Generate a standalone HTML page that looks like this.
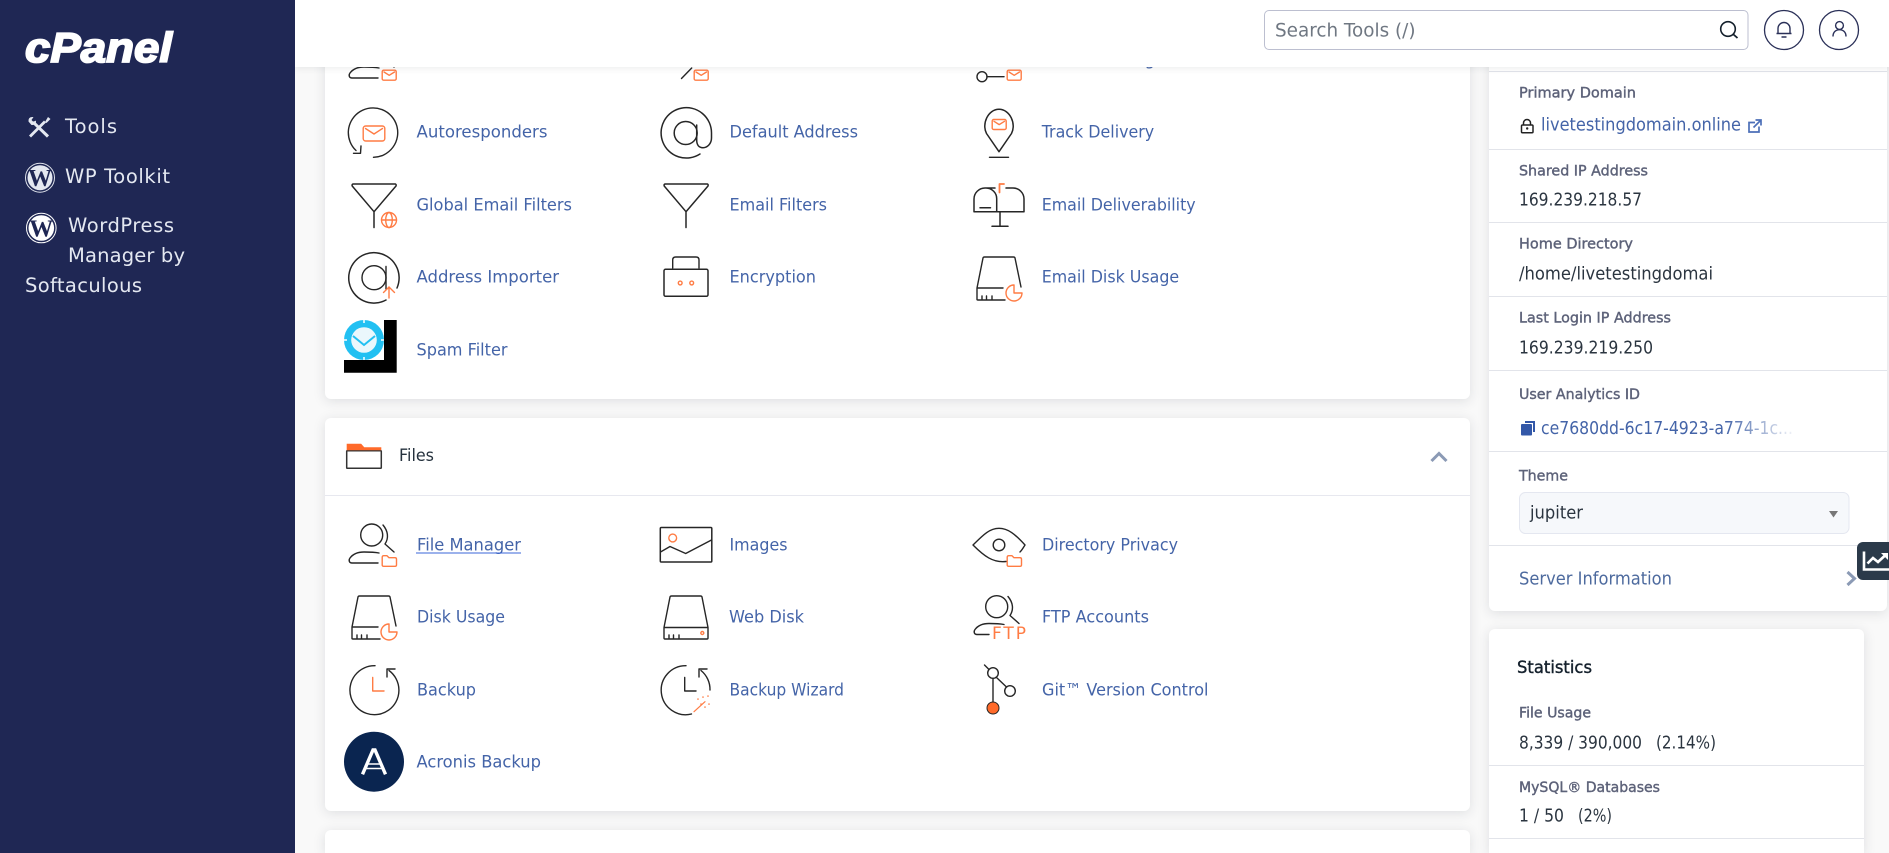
<!DOCTYPE html>
<html><head><meta charset="utf-8"><title>cPanel</title>
<style>
html,body{margin:0;padding:0;width:1889px;height:853px;overflow:hidden;background:#f9f9f9}
#w{position:absolute;left:0;top:0;width:1889px;height:853px;overflow:hidden;background:#f9f9f9}
.a{position:absolute}
.p{background:#fff;border-radius:6px;box-shadow:0 2px 12px rgba(40,50,60,.13)}
svg{position:absolute;left:0;top:0;display:block}
text{font-family:"DejaVu Sans","Liberation Sans",sans-serif}
.l{font-size:17px;fill:#4464a8;transform:translateY(-.7px)}
.v{font-size:17px;fill:#2b3540;transform:translateY(-.5px)}
.b{font-size:14.5px;fill:#5d6279;stroke:#5d6279;stroke-width:.4;transform:translateY(-.5px)}
.s{font-size:19.5px;fill:#e4e8f1}
.k{fill:none;stroke:#262626;stroke-width:1.4;stroke-linecap:round;stroke-linejoin:round}
.o{fill:none;stroke:#ff7c44;stroke-width:1.4;stroke-linecap:round;stroke-linejoin:round}
</style></head><body><div id="w">
<div class="a p" style="left:325px;top:0;width:1145px;height:399px;border-radius:0 0 6px 6px"></div>
<div class="a p" style="left:325px;top:418px;width:1145px;height:393px"></div>
<div class="a p" style="left:325px;top:830px;width:1145px;height:23px;border-radius:6px 6px 0 0"></div>
<div class="a p" style="left:1489px;top:0;width:398px;height:611px;border-radius:0 0 6px 6px"></div>
<div class="a p" style="left:1489px;top:629px;width:375px;height:224px;border-radius:6px 6px 0 0"></div>

<svg width="1889" height="853" viewBox="0 0 1889 853">
<defs>
<linearGradient id="fade" gradientUnits="userSpaceOnUse" x1="1725" y1="0" x2="1793" y2="0"><stop offset="0" stop-color="#4464a8"/><stop offset="1" stop-color="#4464a8" stop-opacity=".08"/></linearGradient>
<g id="person"><circle class="k" cx="371.7" cy="535" r="11"/><path class="k" d="M383 525c5 6 6 13 2 19l9 8"/><path class="k" d="M378 563H352c-3 0-3.500-3-2-5 3-4 8-6 14-6 6 0 10 0 15 1"/></g>
<g id="env"><rect class="o" x=".7" y=".7" width="14" height="10" rx="1.500"/><path class="o" d="M2.500 2.500 7.700 5.800 13 2.500"/></g>
<g id="folder"><path class="o" d="M.7 2.200Q.7 .7 2.200 .7H5.500L7.500 2.700H13.500Q15 2.700 15 4.200V10Q15 11.300 13.500 11.300H2.200Q.7 11.300 .7 10Z"/></g>
<g id="disk"><path class="k" d="M1003 288H977L983 258Q983.300 257 984.500 257H1013.500Q1014.700 257 1015 258L1021 287M977 288V299.500Q977 300 978 300H1005M982 296V300M986.500 296V300M992 296V300"/></g>
<g id="pie"><path class="o" d="M1014 285A8 8 0 1 0 1022 293H1014Z"/></g>
<g id="funnel"><path class="k" d="M353 184H395.500Q396.500 184.500 396 186L374 211.700 352.200 186Q351.700 184.500 353 184ZM374 212V227.500" style="stroke-width:1.500"/></g>
<g id="clockarc"><path class="k" d="M375 665.700A24.500 24.500 0 1 0 389 670.500"/><path class="k" d="M395 669H387V677"/></g>
</defs>

<use href="#person" transform="translate(0,-485)"/>
<use href="#env" transform="translate(381.500,69.500)"/>
<path class="k" d="M681.500 78.500 691.700 68"/>
<use href="#env" transform="translate(693.500,69.500)"/>
<circle class="k" cx="982" cy="76.700" r="5"/><path class="k" d="M987 76.700H1004"/>
<use href="#env" transform="translate(1006.500,69.500)"/>
<text class="l" x="1042" y="65.500" textLength="113" lengthAdjust="spacingAndGlyphs">Email Routing</text>

<path class="k" d="M373.500 157.300A24.700 24.700 0 1 0 356 150.500"/><path class="k" d="M353.500 153.300H360.500L361 146"/>
<rect class="o" x="363.200" y="126" width="21.600" height="15" rx="2.500"/><path class="o" d="M365.500 128.500 374 134 382.500 128.500"/>
<text class="l" x="416.500" y="138" textLength="131" lengthAdjust="spacingAndGlyphs">Autoresponders</text>

<path class="k" d="M700 154A25.200 25.200 0 1 1 711.500 133V138C711.500 144 707 147.700 703 147.700 699 147.700 696.700 145 696.700 140V125" style="stroke-width:1.500"/>
<circle class="k" cx="685.700" cy="133" r="11.500" style="stroke-width:1.500"/>
<text class="l" x="729.500" y="138" textLength="128.500" lengthAdjust="spacingAndGlyphs">Default Address</text>

<path class="k" d="M999 151.700 986.500 133.500C981.500 124 988 109.300 999 109.300 1010 109.300 1016.500 124 1011.500 133.500Z" style="stroke-width:1.500"/>
<path class="k" d="M989.500 157.300H1008.500"/>
<use href="#env" transform="translate(991.500,118.800)"/>
<text class="l" x="1041.700" y="138" textLength="112.500" lengthAdjust="spacingAndGlyphs">Track Delivery</text>

<use href="#funnel"/>
<circle class="o" cx="389" cy="220" r="7.500"/><ellipse class="o" cx="389" cy="220" rx="3.300" ry="7.500"/><path class="o" d="M381.500 220H396.500"/>
<text class="l" x="416.500" y="211" textLength="155.500" lengthAdjust="spacingAndGlyphs">Global Email Filters</text>

<use href="#funnel" transform="translate(312,0)"/>
<text class="l" x="729.500" y="211" textLength="97.500" lengthAdjust="spacingAndGlyphs">Email Filters</text>

<path class="k" d="M974 211.700V199A11 11 0 0 1 985 188H986A10.700 10.700 0 0 1 996.700 199V211.700ZM986 188H995M1006 188H1013A11 11 0 0 1 1024 199V211.700H996.700M1000 212V226M992 226.300H1008M980 207.700H990.500" style="stroke-width:1.500"/>
<path class="o" d="M999.500 192.500V184H1004" style="stroke-width:1.800"/>
<text class="l" x="1041.700" y="211" textLength="154" lengthAdjust="spacingAndGlyphs">Email Deliverability</text>

<path class="k" d="M397 288A25.200 25.200 0 1 0 386 300" style="stroke-width:1.500"/>
<circle class="k" cx="374" cy="277.700" r="12"/><path class="k" d="M386 266.500V289"/>
<path class="o" d="M389 298V287M383.500 292.500 389 287 394.500 292.500"/>
<text class="l" x="416.500" y="283" textLength="142.500" lengthAdjust="spacingAndGlyphs">Address Importer</text>

<path class="k" d="M672.700 268V260Q672.700 257 675.700 257H696Q699 257 699 260V268"/>
<rect class="k" x="664" y="269.300" width="44" height="27" rx="1.500" style="stroke-width:1.500"/>
<circle class="o" cx="680.200" cy="283" r="1.900"/><circle class="o" cx="691.700" cy="283" r="1.900"/>
<text class="l" x="729.500" y="283" textLength="86.500" lengthAdjust="spacingAndGlyphs">Encryption</text>

<use href="#disk"/><use href="#pie"/>
<text class="l" x="1041.700" y="283" textLength="137.500" lengthAdjust="spacingAndGlyphs">Email Disk Usage</text>

<path d="M384 320H396.700V372.700H344V360H384Z" fill="#000"/>
<circle cx="364" cy="340" r="20" fill="#22c0f2"/>
<circle cx="364" cy="340" r="12.800" fill="#eaf7fc"/>
<path d="M353 336 364 345 375 336" fill="none" stroke="#22c0f2" stroke-width="2"/>
<g stroke="#fff" stroke-width="1.500"><path d="M364 320V323M364 357V360M344 340H347M381 340H384"/></g>
<text class="l" x="416.500" y="356" textLength="91" lengthAdjust="spacingAndGlyphs">Spam Filter</text>

<rect x="346.700" y="450.700" width="34.600" height="17.500" fill="#fff" stroke="#333" stroke-width="1.500" rx=".5"/>
<path d="M347 450V444H361L364 447.500H381V450Z" fill="#ff6a2a" stroke="#ff6a2a" stroke-width=".6"/>
<text x="399" y="461" font-size="17" fill="#26323e" textLength="35" lengthAdjust="spacingAndGlyphs">Files</text>
<path d="M1431.500 461 1439 453.500 1446.500 461" fill="none" stroke="#8b9ab5" stroke-width="3"/>
<rect x="325" y="495" width="1145" height="1" fill="#e7e8ef"/>

<use href="#person"/><use href="#folder" transform="translate(381.500,555)"/>
<text class="l" x="417" y="551" textLength="104" lengthAdjust="spacingAndGlyphs">File Manager</text>
<rect x="416" y="552.500" width="105" height="1" fill="#3a66d8"/>

<rect class="k" x="660.300" y="527.500" width="51.500" height="34.500" rx="1" style="stroke-width:1.500"/>
<circle class="o" cx="672.700" cy="538" r="3.900"/>
<path class="k" d="M660.500 552 670 546.500 685.700 553.500 711.500 540"/>
<text class="l" x="729.500" y="551" textLength="58" lengthAdjust="spacingAndGlyphs">Images</text>

<path class="k" d="M1006 561.500C993 563 984 556 973 545 984 534 990 528.300 999 528.300 1008 528.300 1015 534 1025 545 1023 548 1022 550 1020 552" style="stroke-width:1.400"/>
<circle class="k" cx="999" cy="545" r="5.800"/>
<use href="#folder" transform="translate(1006.500,555)"/>
<text class="l" x="1042" y="551" textLength="136" lengthAdjust="spacingAndGlyphs">Directory Privacy</text>

<use href="#disk" transform="translate(-625,339)"/><use href="#pie" transform="translate(-625,339)"/>
<text class="l" x="417" y="623" textLength="88" lengthAdjust="spacingAndGlyphs">Disk Usage</text>

<path class="k" d="M664 627.500 670 597Q670.300 596 671.500 596H700.500Q701.700 596 702 597L708 627.500V638Q708 639 707 639H665Q664 639 664 638ZM664 627.500H708M669 635V639M673.500 635V639M679 635V639"/>
<circle class="o" cx="702.300" cy="633" r="1.500"/>
<text class="l" x="729" y="623" textLength="75" lengthAdjust="spacingAndGlyphs">Web Disk</text>

<circle class="k" cx="996.700" cy="606.700" r="11"/>
<path class="k" d="M1008 596.500c5 6 6 13 2 19l9 8"/>
<path class="k" d="M989 634.500H977c-3 0-3.500-3-2-5 3-4 8-6 14-6 6 0 10 0 15 1"/>
<text x="992" y="639" font-size="17" fill="#ff7c44" textLength="34" lengthAdjust="spacing">FTP</text>
<text class="l" x="1042" y="623" textLength="107" lengthAdjust="spacingAndGlyphs">FTP Accounts</text>

<use href="#clockarc"/>
<path class="o" d="M372.700 677.500V691H384"/>
<text class="l" x="417" y="696" textLength="59" lengthAdjust="spacingAndGlyphs">Backup</text>

<path class="k" d="M686 665.700A24.500 24.500 0 1 0 691.500 714M710 690A24.500 24.500 0 0 0 701 670.500"/>
<path class="k" d="M707 669H699V677"/>
<path class="k" d="M684.700 677.500V691H696"/>
<path class="o" d="M694 711.700 705 701.700" style="stroke-width:1.200"/>
<path class="o" d="M698 699V699.100M703 697V697.100M708 696V696.100M709 704V704.100M701 704V704.100M705 707V707.100" style="stroke-width:1.600"/>
<text class="l" x="729.500" y="696" textLength="114.500" lengthAdjust="spacingAndGlyphs">Backup Wizard</text>

<path class="k" d="M984.500 665 989 669.500"/>
<circle class="k" cx="993" cy="673" r="5.300"/>
<path class="k" d="M993 678.500V702.500M996.500 677.500 1006.500 687"/>
<circle class="k" cx="1010" cy="691" r="5.300"/>
<circle cx="993" cy="708" r="6" fill="#ff6a2a" stroke="#262626" stroke-width="1"/>
<text class="l" x="1042" y="696" textLength="166.500" lengthAdjust="spacingAndGlyphs">Git™ Version Control</text>

<circle cx="374" cy="761.700" r="30" fill="#0a2550"/>
<path d="M362.500 774.300 373 750H375L385.500 774.300" fill="none" stroke="#fff" stroke-width="3.400"/>
<path d="M367 764H381M365 768.500H383" stroke="#fff" stroke-width="1.600"/>
<text class="l" x="416.500" y="768" textLength="124.500" lengthAdjust="spacingAndGlyphs">Acronis Backup</text>

<g fill="#e2e4ea">
<rect x="1489" y="71" width="398" height="1"/>
<rect x="1489" y="149" width="398" height="1"/>
<rect x="1489" y="222" width="398" height="1"/>
<rect x="1489" y="296" width="398" height="1"/>
<rect x="1489" y="370" width="398" height="1"/>
<rect x="1489" y="451" width="398" height="1"/>
<rect x="1489" y="545" width="398" height="1"/>
<rect x="1489" y="765" width="375" height="1"/>
<rect x="1489" y="838" width="375" height="1"/>
</g>

<text class="b" x="1519" y="98" textLength="117" lengthAdjust="spacingAndGlyphs">Primary Domain</text>
<path d="M1523.500 125V123A3.500 3.500 0 0 1 1530.500 123V125" fill="none" stroke="#222" stroke-width="1.500"/>
<rect x="1521.500" y="125" width="11.500" height="7.700" rx="1" fill="none" stroke="#222" stroke-width="1.500"/>
<circle cx="1527.200" cy="128.500" r="1.200" fill="#222"/>
<text class="l" x="1541" y="131" textLength="200" lengthAdjust="spacingAndGlyphs" style="font-size:18px">livetestingdomain.online</text>
<path d="M1755 122.500H1749V132H1759V126.500M1753.500 127.500 1760.500 120.500M1755.500 120H1761V125.500" fill="none" stroke="#4c6fb8" stroke-width="1.700"/>

<text class="b" x="1519" y="176" textLength="129" lengthAdjust="spacingAndGlyphs">Shared IP Address</text>
<text class="v" x="1519" y="206" textLength="123" lengthAdjust="spacingAndGlyphs" style="font-size:18px">169.239.218.57</text>
<text class="b" x="1519" y="249" textLength="114" lengthAdjust="spacingAndGlyphs">Home Directory</text>
<text class="v" x="1519" y="280" textLength="194" lengthAdjust="spacingAndGlyphs" style="font-size:18px">/home/livetestingdomai</text>
<text class="b" x="1519" y="323" textLength="152" lengthAdjust="spacingAndGlyphs">Last Login IP Address</text>
<text class="v" x="1519" y="354" textLength="134" lengthAdjust="spacingAndGlyphs" style="font-size:18px">169.239.219.250</text>
<text class="b" x="1519" y="399.500" textLength="121" lengthAdjust="spacingAndGlyphs">User Analytics ID</text>
<path d="M1525 421H1535V432H1533V423H1525Z" fill="#3358a8"/><rect x="1521" y="424" width="11" height="11.500" rx="1" fill="#3358a8"/>
<text x="1541" y="434" textLength="252" lengthAdjust="spacingAndGlyphs" font-size="18" fill="url(#fade)">ce7680dd-6c17-4923-a774-1c...</text>
<text class="b" x="1519" y="481" textLength="49" lengthAdjust="spacingAndGlyphs">Theme</text>
<rect x="1519.500" y="492.500" width="329.500" height="41" rx="6" fill="#f6f8fb" stroke="#e4e7f0"/>
<text class="v" x="1530" y="519" textLength="53" lengthAdjust="spacingAndGlyphs" style="font-size:18px">jupiter</text>
<path d="M1829 511H1838L1833.500 517.500Z" fill="#777"/>
<text class="l" x="1519" y="585" textLength="153" lengthAdjust="spacingAndGlyphs" style="font-size:18px;fill:#4d6a9e">Server Information</text>
<path d="M1847.500 572 1854.500 578.500 1847.500 585" fill="none" stroke="#8b9ab5" stroke-width="3"/>

<text x="1517" y="673" font-size="17" fill="#14202c" stroke="#14202c" stroke-width=".4" textLength="75" lengthAdjust="spacingAndGlyphs">Statistics</text>
<text class="b" x="1519" y="718" textLength="72" lengthAdjust="spacingAndGlyphs">File Usage</text>
<text class="v" x="1519" y="749" textLength="123" lengthAdjust="spacingAndGlyphs" style="font-size:17.500px">8,339 / 390,000</text>
<text class="v" x="1656" y="749" textLength="60" lengthAdjust="spacingAndGlyphs" style="font-size:17.500px">(2.14%)</text>
<text class="b" x="1519" y="792.500" textLength="141" lengthAdjust="spacingAndGlyphs">MySQL® Databases</text>
<text class="v" x="1519" y="822" textLength="45" lengthAdjust="spacingAndGlyphs" style="font-size:17.500px">1 / 50</text>
<text class="v" x="1578" y="822" textLength="34" lengthAdjust="spacingAndGlyphs" style="font-size:17.500px">(2%)</text>
</svg>

<div class="a" style="left:295px;top:0;width:1594px;height:67px;background:#fff;box-shadow:0 2px 6px rgba(40,50,60,.08)"></div>
<div class="a" style="left:0;top:0;width:295px;height:853px;background:#1f2754"></div>
<div class="a" style="left:1857px;top:542px;width:32px;height:38px;background:#2b3a4a;border-radius:6px 0 0 6px"></div>

<svg width="1889" height="853" viewBox="0 0 1889 853">
<rect x="1264.500" y="10.500" width="483.500" height="39" rx="4.500" fill="#fff" stroke="#bcbfd0"/>
<text x="1275" y="36.500" font-size="19" fill="#6f7782" textLength="140.500" lengthAdjust="spacingAndGlyphs">Search Tools (/)</text>
<circle cx="1728" cy="29" r="7.300" fill="none" stroke="#14202c" stroke-width="1.600"/><path d="M1733.500 34.500 1737.500 38" stroke="#14202c" stroke-width="1.800"/>
<circle cx="1784" cy="30" r="19.500" fill="#fff" stroke="#2a3058" stroke-width="1.300"/>
<path d="M1778 33.500V28.500A6 6 0 0 1 1790 28.500V33.500M1776.500 33.500H1791.500M1781.500 37H1786.500" fill="none" stroke="#2a3058" stroke-width="1.400"/>
<circle cx="1839" cy="30" r="19.500" fill="#fff" stroke="#2a3058" stroke-width="1.300"/>
<circle cx="1839.500" cy="25.500" r="3.900" fill="none" stroke="#2a3058" stroke-width="1.400"/>
<path d="M1833 36.500C1833 32 1836 29.700 1839.500 29.700S1846 32 1846 36.500" fill="none" stroke="#2a3058" stroke-width="1.400"/>

<text x="25" y="62" font-size="42" font-weight="700" font-style="italic" fill="#fff" stroke="#fff" stroke-width="1.800" textLength="147" lengthAdjust="spacingAndGlyphs" style="font-family:'Liberation Sans',sans-serif">cPanel</text>

<path d="M33 122 48 136.500" stroke="#e4e8f1" stroke-width="3" fill="none"/>
<path d="M30 136.500 45 121.500" stroke="#e4e8f1" stroke-width="2.800" fill="none"/>
<path d="M45 122 48 117 50.500 119 46.500 123Z" fill="#e4e8f1"/>
<path d="M28.500 121.500Q28 116.500 33.500 117L31.500 120 33.500 122 36 120.500Q36.500 125.500 31.500 125Z" fill="#e4e8f1"/>
<text class="s" x="65" y="133" textLength="52" lengthAdjust="spacing">Tools</text>

<circle cx="40" cy="177.700" r="14.500" fill="none" stroke="#dfe3ec" stroke-width="1"/>
<circle cx="40" cy="177.700" r="12.500" fill="#e4e8f1"/>
<text x="40" y="186" text-anchor="middle" font-size="24" font-weight="700" fill="#1f2754" style="font-family:'Liberation Serif',serif">W</text>
<text class="s" x="65" y="183" textLength="105" lengthAdjust="spacing">WP Toolkit</text>

<circle cx="41.300" cy="228" r="14.800" fill="none" stroke="#fff" stroke-width="1"/>
<circle cx="41.300" cy="228" r="12.800" fill="#fff"/>
<text x="41.300" y="236.500" text-anchor="middle" font-size="24" font-weight="700" fill="#1f2754" style="font-family:'Liberation Serif',serif">W</text>
<text class="s" x="68" y="232" textLength="106" lengthAdjust="spacing">WordPress</text>
<text class="s" x="68" y="262" textLength="117" lengthAdjust="spacing">Manager by</text>
<text class="s" x="25" y="292" textLength="117" lengthAdjust="spacing">Softaculous</text>

<path d="M1864 551.500V569.500H1889" fill="none" stroke="#fff" stroke-width="2.600"/>
<path d="M1867.500 563.500 1873 558 1878 562 1885 555.500" fill="none" stroke="#fff" stroke-width="2.600"/>
<path d="M1881 553H1888V560Z" fill="#fff"/>
</svg>
</div></body></html>
